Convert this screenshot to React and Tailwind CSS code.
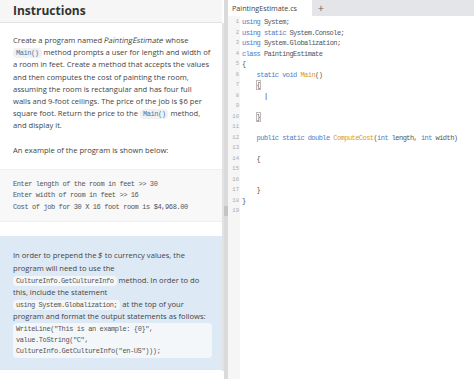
import React from 'react';

const prose = { fontFamily: '"Open Sans", sans-serif' };
const mono = { fontFamily: '"Liberation Mono", monospace' };

function Code({ children, blue }) {
  return (
    <span
      className={`whitespace-nowrap rounded-sm px-[3px] py-[1px] text-[7px] leading-none tracking-[-0.45px] ${blue ? 'bg-[#f4f7fa] text-[#555]' : 'bg-[#f1f1f1] text-[#4a78a8]'}`}
      style={mono}
    >
      {children}
    </span>
  );
}

// slanted regular face, keeps the width of the upright text
function Em({ children }) {
  return <span className="inline-block -skew-x-12">{children}</span>;
}

const kw = 'text-[#4f7cc4]';
const fn = 'text-[#d89a2b]';

const lines = [
  [['using', kw], [' System;']],
  [['using static', kw], [' System.Console;']],
  [['using', kw], [' System.Globalization;']],
  [['class', kw], [' PaintingEstimate']],
  [['{']],
  [['    '], ['static void', kw], [' '], ['Main', fn], ['()']],
  [['    '], ['{', 'outline outline-1 outline-[#bbb]']],
  [['      '], ['|', 'text-[#333]']],
  [],
  [['    '], ['}', 'outline outline-1 outline-[#bbb]']],
  [],
  [['    '], ['public static double', kw], [' '], ['ComputeCost', fn], ['('], ['int', kw], [' length, '], ['int', kw], [' width)']],
  [],
  [['    {']],
  [],
  [],
  [['    }']],
  [['}']],
  [],
];

export default function App() {
  return (
    <div className="flex h-[379px] w-[474px] overflow-hidden bg-white">
      {/* instructions */}
      <div className="flex w-[222px] shrink-0 flex-col" style={prose}>
        <div className="flex h-[23px] shrink-0 items-center border-b border-[#e2e2e2] bg-[#f6f6f6] px-[13px]">
          <h1 className="text-[12px] font-bold text-[#333]">Instructions</h1>
        </div>
        <div className="pt-[11px] pr-[10.9px] pl-[13px] text-[7.6px] leading-[12.2px] text-[#444]">
          <p>
            Create a program named <Em>PaintingEstimate</Em> whose <Code>Main()</Code> method prompts a user for length and width of a room in feet. Create a method that accepts the values and then computes the cost of painting the room, assuming the room is rectangular and has four full walls and 9-foot ceilings. The price of the job is $6 per square foot. Return the price to the <Code>Main()</Code> method, and display it.
          </p>
          <p className="mt-[12px]">An example of the program is shown below:</p>
        </div>
        <div className="mt-[13px] shrink-0 border-y border-[#efefef] bg-[#f8f8f8] px-[13px] pt-[9px] pb-[8px] text-[7px] leading-[11.5px] tracking-[-0.4px] text-[#555]" style={mono}>
          <div>Enter length of the room in feet &gt;&gt; 30</div>
          <div>Enter width of room in feet &gt;&gt; 16</div>
          <div>Cost of job for 30 X 16 foot room is $4,968.00</div>
        </div>
        <div className="mt-[14px] shrink-0 border-b border-[#e6e6e6] bg-[#dde9f4] pt-[13px] pr-[6px] pb-[11px] pl-[13px] text-[7.6px] leading-[12.2px] text-[#444]">
          <p>
            In order to prepend the <Em>$</Em> to currency values, the program will need to use the <Code blue>CultureInfo.GetCultureInfo</Code> method. In order to do this, include the statement <Code blue>using System.Globalization;</Code> at the top of your program and format the output statements as follows:
          </p>
          <div className="mr-[4px] rounded-sm bg-[#f4f7fa] px-[3px] py-[1px] text-[7px] leading-[11px] tracking-[-0.4px] text-[#555]" style={mono}>
            <div>WriteLine("This is an example: {'{0}'}",</div>
            <div>value.ToString("C",</div>
            <div>CultureInfo.GetCultureInfo("en-US")));</div>
          </div>
        </div>
      </div>

      {/* scrollbar + divider */}
      <div className="flex shrink-0">
        <div className="mt-[23px] mb-[8px] w-[2px] bg-[#e2e2e2]" />
        <div className="flex w-[4px] items-center bg-[#dadada]">
          <div className="mt-[42px] h-[10px] w-full bg-[#c4c4c4]" />
        </div>
      </div>

      {/* editor */}
      <div className="flex min-w-0 flex-1 flex-col">
        <div className="flex h-[16px] shrink-0 items-stretch bg-[#e3e5e9]">
          <div className="flex w-[84px] items-center bg-white px-[4px] text-[7.2px] text-[#444]" style={prose}>
            PaintingEstimate.cs
          </div>
          <div className="flex w-[18px] items-center justify-center text-[11px] text-[#666]" style={prose}>+</div>
        </div>
        <div className="flex flex-1">
          <div className="flex w-[12px] flex-col items-end bg-[#f6f6f6] pt-[1px] pr-[1px] text-[5.6px] leading-[10.5px] text-[#aaa]" style={mono}>
            {lines.map((_, i) => (
              <div key={i} className="h-[10.5px]">{i + 1}</div>
            ))}
          </div>
          <div className="flex-1 pt-[1px] pl-[2px] text-[7px] leading-[10.5px] tracking-[-0.55px] whitespace-pre text-[#555]" style={mono}>
            {lines.map((l, i) => (
              <div key={i} className="h-[10.5px]">
                {l.map(([t, c], j) => (
                  <span key={j} className={c}>{t}</span>
                ))}
              </div>
            ))}
          </div>
        </div>
      </div>
    </div>
  );
}
